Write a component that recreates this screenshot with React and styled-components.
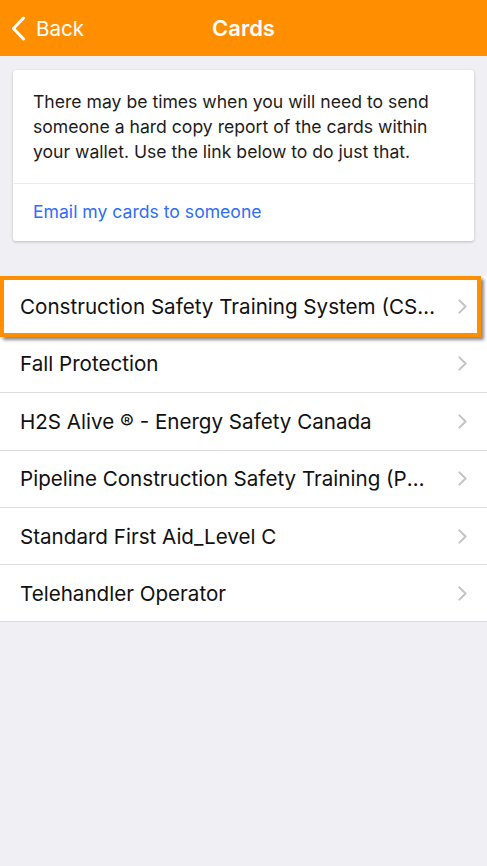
import React from 'react'
import styled, { createGlobalStyle } from 'styled-components'

const GlobalStyle = createGlobalStyle`
  html, body {
    margin: 0;
    padding: 0;
    background: #efeff4;
    font-family: Inter, 'Liberation Sans', Arial, sans-serif;
    -webkit-font-smoothing: antialiased;
  }
`

const Page = styled.div`
  width: 487px;
  min-height: 866px;
  background: #efeff4;
`

const NavBar = styled.header`
  height: 56px;
  background: #ff8f00;
  display: grid;
  grid-template-columns: 1fr auto 1fr;
  align-items: center;
  color: #fff;
`

const BackButton = styled.button`
  display: flex;
  align-items: center;
  gap: 10px;
  padding: 0 0 0 11px;
  border: none;
  background: none;
  color: #fff;
  font-family: inherit;
  font-size: 20.6px;
  justify-self: start;
`

const Title = styled.h1`
  margin: 0;
  font-size: 22px;
  font-weight: 600;
`

const InfoCard = styled.section`
  margin: 14px 13px 0;
  background: #fff;
  border-radius: 3px;
  box-shadow: 0 1px 3px rgba(0, 0, 0, 0.22);
`

const InfoText = styled.p`
  margin: 0;
  padding: 19px 20px 19px;
  font-size: 17.6px;
  line-height: 25px;
  color: #1c1c1c;
  border-bottom: 1px solid #ececef;
`

const EmailLink = styled.a`
  display: block;
  padding: 18px 20px 19px;
  font-size: 17.6px;
  line-height: 20px;
  color: #2f6ef5;
  text-decoration: none;
`

const List = styled.ul`
  list-style: none;
  margin: 37px 0 0;
  padding: 0;
  background: #fff;
  border-bottom: 1px solid #dcdcdf;
`

const Row = styled.li`
  position: relative;
  height: 57.3px;
  display: flex;
  align-items: center;
  padding: 0 20px;
  border-top: ${p => (p.$first ? 'none' : '1px solid #dcdcdf')};
  box-sizing: border-box;
  ${p => p.$selected && `
    border: 4px solid #ff8f00;
    margin: -2px 6px -2px 0;
    padding: 0 10px 0 16px;
    box-shadow: 3px 3px 3px rgba(0, 0, 0, 0.45);
    z-index: 1;
    height: 61px;
  `}
`

const Label = styled.span`
  flex: 1;
  font-size: 20.6px;
  color: #111;
  white-space: nowrap;
  overflow: hidden;
  text-overflow: ellipsis;
  padding-right: ${p => (p.$selected ? '14px' : '22px')};
`

const Chevron = ({ color = '#c4c4c8', size = 15 }) => (
  <svg width={size * 0.62} height={size} viewBox="0 0 8 13" fill="none">
    <path d="M1.2 1.2 L6.5 6.5 L1.2 11.8" stroke={color} strokeWidth="1.8" strokeLinecap="round" strokeLinejoin="round" />
  </svg>
)

const BackChevron = () => (
  <svg width="15" height="25" viewBox="0 0 15 25" fill="none">
    <path d="M12.5 2 L2.5 12.5 L12.5 23" stroke="#fff" strokeWidth="3" strokeLinecap="round" strokeLinejoin="round" />
  </svg>
)

const cards = [
  'Construction Safety Training System (CSTS)',
  'Fall Protection',
  'H2S Alive ® - Energy Safety Canada',
  'Pipeline Construction Safety Training (PCST)',
  'Standard First Aid_Level C',
  'Telehandler Operator',
]

const App = () => {
  return (
    <Page>
      <GlobalStyle />
      <NavBar>
        <BackButton>
          <BackChevron />
          Back
        </BackButton>
        <Title>Cards</Title>
        <span />
      </NavBar>
      <InfoCard>
        <InfoText>
          There may be times when you will need to send someone a hard copy report of the cards within your wallet. Use the link below to do just that.
        </InfoText>
        <EmailLink href="#">Email my cards to someone</EmailLink>
      </InfoCard>
      <List>
        {cards.map((c, i) => (
          <Row key={c} $first={i === 0 || i === 1} $selected={i === 0}>
            <Label $selected={i === 0}>{c}</Label>
            <Chevron />
          </Row>
        ))}
      </List>
    </Page>
  )
}

export default App
